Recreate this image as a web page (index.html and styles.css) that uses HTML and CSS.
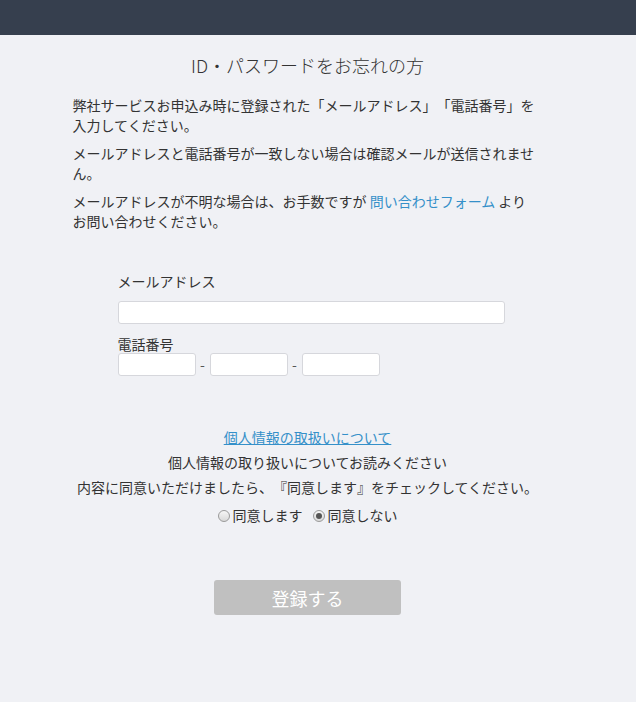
FILE: index.html
```html
<!DOCTYPE html>
<html lang="ja">
<head>
<meta charset="utf-8">
<title>ID・パスワードをお忘れの方</title>
<link rel="stylesheet" href="styles.css">
</head>
<body>
<header class="topbar"></header>
<div class="page">
  <main class="content">
    <h1 class="title">ID・パスワードをお忘れの方</h1>
    <p class="note">弊社サービスお申込み時に登録された「メールアドレス」「電話番号」を入力してください。</p>
    <p class="note">メールアドレスと電話番号が一致しない場合は確認メールが送信されません。</p>
    <p class="note">メールアドレスが不明な場合は、お手数ですが <a class="inline-link" href="#">問い合わせフォーム</a> より<br>お問い合わせください。</p>

    <form class="form">
      <label class="label label-mail" for="mail">メールアドレス</label>
      <input class="field field-mail" id="mail" type="text">
      <div class="label label-tel">電話番号</div>
      <div class="tel-row">
        <input class="field field-tel" type="text">
        <span class="sep">-</span>
        <input class="field field-tel" type="text">
        <span class="sep">-</span>
        <input class="field field-tel" type="text">
      </div>
    </form>

    <section class="privacy">
      <a class="privacy-link" href="#">個人情報の取扱いについて</a>
      <p class="privacy-text">個人情報の取り扱いについてお読みください</p>
      <p class="privacy-text">内容に同意いただけましたら、『同意します』をチェックしてください。</p>
      <div class="radios">
        <label class="radio-item"><input class="radio" type="radio" name="agree">同意します</label>
        <label class="radio-item"><input class="radio" type="radio" name="agree" checked>同意しない</label>
      </div>
    </section>

    <div class="actions">
      <button class="submit" type="button">登録する</button>
    </div>
  </main>
</div>
</body>
</html>
```
FILE: styles.css
```css
html, body {
  margin: 0;
  padding: 0;
}
body {
  background: #f0f1f5;
  color: #333;
  font-family: "Noto Sans CJK JP", "Noto Sans", sans-serif;
  font-size: 14px;
  min-height: 702px;
  text-spacing-trim: space-all;
}
.topbar {
  height: 35px;
  background: #363f4e;
}
.page {
  width: 615px;
}
.content {
  width: 470px;
  margin: 0 auto;
}
.title {
  margin: 17px 0 0;
  font-size: 18px;
  font-weight: 300;
  line-height: 27px;
  text-align: center;
  color: #333;
}
.note {
  margin: 0 0 8px;
  max-width: 462px;
  line-height: 20px;
}
.title + .note {
  margin-top: 16px;
}
.inline-link {
  color: #3590c9;
  text-decoration: none;
}
.form {
  padding-left: 45px;
  margin-top: 40px;
  display: flex;
  flex-direction: column;
  align-items: flex-start;
}
.label {
  line-height: 20px;
}
.label-mail {
  margin-bottom: 10px;
}
.label-tel {
  margin-top: 11px;
  line-height: 18px;
}
.field {
  box-sizing: border-box;
  height: 23px;
  margin: 0;
  padding: 0 4px;
  border: 1px solid #d6d7dc;
  border-radius: 3px;
  background: #fff;
  font-family: inherit;
  font-size: 14px;
}
.field-mail {
  width: 387px;
}
.tel-row {
  display: flex;
  align-items: center;
}
.field-tel {
  width: 78px;
}
.sep {
  width: 14px;
  text-align: center;
  line-height: 23px;
  color: #555;
}
.privacy {
  margin-top: 49px;
  text-align: center;
}
.privacy-link {
  display: block;
  line-height: 25px;
  color: #3590c9;
  text-decoration: underline;
}
.privacy-text {
  margin: 0;
  line-height: 25px;
}
.radios {
  margin-top: 3px;
  display: flex;
  justify-content: center;
  gap: 10px;
  line-height: 25px;
}
.radio-item {
  display: flex;
  align-items: center;
  gap: 3px;
}
.radio {
  appearance: none;
  -webkit-appearance: none;
  box-sizing: border-box;
  width: 12px;
  height: 12px;
  margin: 0;
  border: 1px solid #9a9a9a;
  border-radius: 50%;
  background: linear-gradient(#f6f6f6, #d9d9d9);
  position: relative;
}
.radio:checked::after {
  content: "";
  position: absolute;
  left: 2px;
  top: 2px;
  width: 6px;
  height: 6px;
  border-radius: 50%;
  background: #555;
}
.actions {
  margin-top: 52px;
  display: flex;
  justify-content: center;
}
.submit {
  width: 187px;
  height: 35px;
  border: none;
  border-radius: 3px;
  background: #c0c0c0;
  color: #fff;
  font-family: inherit;
  font-size: 18px;
  padding: 0;
}
```
